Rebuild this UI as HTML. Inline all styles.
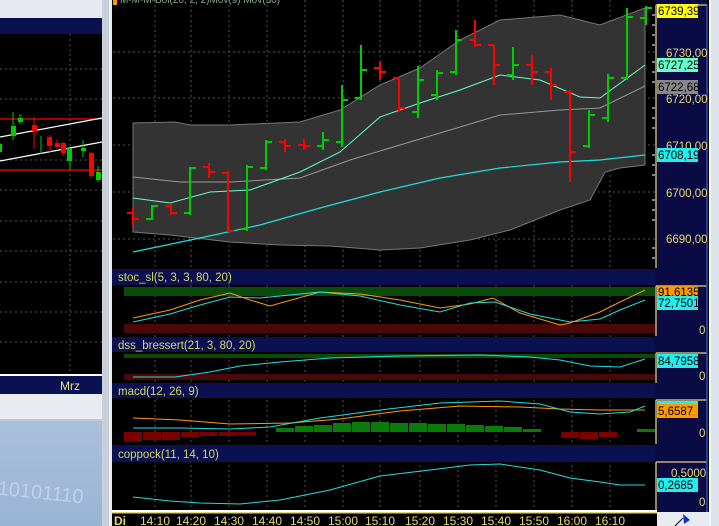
<!DOCTYPE html><html><head><style>body{margin:0;background:#000}svg{display:block}text{font-family:"Liberation Sans",sans-serif}</style></head><body>
<svg width="719" height="526" viewBox="0 0 719 526" xmlns="http://www.w3.org/2000/svg">
<defs><linearGradient id="bg" x1="0" y1="0" x2="0" y2="1"><stop offset="0" stop-color="#a8c0dc"/><stop offset="1" stop-color="#9ab4d4"/></linearGradient></defs>
<!-- left panel -->
<rect x="0" y="0" width="102" height="18" fill="#e6eaf0"/>
<rect x="0" y="18" width="102" height="16" fill="#0a1050"/>
<rect x="0" y="34" width="102" height="340" fill="#000"/>
<g stroke="#555" stroke-dasharray="2,3" stroke-width="1">
<line x1="70" y1="34" x2="70" y2="374"/>
<line x1="0" y1="69" x2="102" y2="69"/><line x1="0" y1="99" x2="102" y2="99"/><line x1="0" y1="160" x2="102" y2="160"/><line x1="0" y1="190" x2="102" y2="190"/><line x1="0" y1="221" x2="102" y2="221"/><line x1="0" y1="251" x2="102" y2="251"/><line x1="0" y1="282" x2="102" y2="282"/><line x1="0" y1="312" x2="102" y2="312"/><line x1="0" y1="342" x2="102" y2="342"/>
</g>
<line x1="0" y1="119" x2="102" y2="119" stroke="#f00" stroke-width="1.2"/>
<line x1="0" y1="170" x2="102" y2="170" stroke="#f00" stroke-width="1.2"/>
<line x1="0" y1="137" x2="102" y2="118" stroke="#fff" stroke-width="1.2"/>
<line x1="0" y1="161" x2="102" y2="142" stroke="#fff" stroke-width="1.2"/>
<g stroke-width="1">
<line x1="13" y1="112" x2="13" y2="140" stroke="#0c0"/><rect x="11" y="126" width="5" height="10" fill="#0c0"/>
<line x1="20" y1="114" x2="20" y2="124" stroke="#0c0"/><rect x="18" y="118" width="5" height="4" fill="#0c0"/>
<line x1="0" y1="143" x2="0" y2="152" stroke="#0c0"/><rect x="0" y="144" width="2" height="8" fill="#0c0"/>
<line x1="34" y1="117" x2="34" y2="149" stroke="#f00"/><rect x="32" y="125" width="5" height="6" fill="#f00"/>
<line x1="41" y1="136" x2="41" y2="154" stroke="#0c0"/>
<line x1="50" y1="135" x2="50" y2="152" stroke="#f00"/><rect x="47" y="137" width="5" height="9" fill="#f00"/>
<line x1="57" y1="140" x2="57" y2="148" stroke="#f00"/><rect x="55" y="143" width="5" height="4" fill="#f00"/>
<line x1="63" y1="142" x2="63" y2="156" stroke="#f00"/><rect x="61" y="143" width="5" height="10" fill="#f00"/>
<line x1="70" y1="148" x2="70" y2="170" stroke="#0c0"/><rect x="67" y="148" width="5" height="13" fill="#0c0"/>
<line x1="83" y1="140" x2="83" y2="157" stroke="#0c0"/><rect x="81" y="148" width="5" height="3" fill="#0c0"/>
<line x1="91" y1="152" x2="91" y2="178" stroke="#f00"/><rect x="89" y="153" width="5" height="23" fill="#f00"/>
<line x1="98" y1="166" x2="98" y2="182" stroke="#0c0"/><rect x="96" y="172" width="5" height="8" fill="#0c0"/>
</g>
<rect x="0" y="374" width="102" height="2" fill="#fff"/>
<rect x="0" y="376" width="102" height="18" fill="#0a1050"/>
<text x="60" y="390" font-size="12" fill="#e8e080">Mrz</text>
<rect x="0" y="394" width="102" height="25" fill="#e8ecf0"/>
<rect x="0" y="419" width="102" height="2" fill="#c0c8d0"/>
<rect x="0" y="421" width="102" height="105" fill="url(#bg)"/>
<text x="-2" y="500" font-size="20" fill="#c8d8ec" transform="rotate(6 50 490)" opacity="0.8">10101110</text>
<!-- divider -->
<rect x="102" y="0" width="10" height="526" fill="#c8d0da"/>
<rect x="109" y="0" width="3" height="526" fill="#e8ecf0"/>
<!-- right chart -->
<rect x="112" y="0" width="597" height="526" fill="#000"/>
<rect x="113" y="0" width="4" height="5" fill="#f90"/>
<text x="120" y="3" font-size="10" fill="#8a8">M-M-M-Bol(20, 2, 2)Mov(9) Mov(30)</text>
<g stroke="#555" stroke-dasharray="2,3">
<line x1="155" y1="0" x2="155" y2="510"/><line x1="191" y1="0" x2="191" y2="510"/><line x1="229" y1="0" x2="229" y2="510"/><line x1="267" y1="0" x2="267" y2="510"/><line x1="305" y1="0" x2="305" y2="510"/><line x1="343" y1="0" x2="343" y2="510"/><line x1="380" y1="0" x2="380" y2="510"/><line x1="420" y1="0" x2="420" y2="510"/><line x1="458" y1="0" x2="458" y2="510"/><line x1="496" y1="0" x2="496" y2="510"/><line x1="534" y1="0" x2="534" y2="510"/><line x1="572" y1="0" x2="572" y2="510"/><line x1="610" y1="0" x2="610" y2="510"/>
<line x1="113" y1="52" x2="655" y2="52"/><line x1="113" y1="98" x2="655" y2="98"/><line x1="113" y1="145" x2="655" y2="145"/><line x1="113" y1="192" x2="655" y2="192"/><line x1="113" y1="239" x2="655" y2="239"/>
</g>
<polygon fill="#333" stroke="#777" points="133,123 175,122 190,125 230,125 300,122 340,110 380,85 420,68 460,40 500,20 560,15 600,25 645,8 645,165 620,168 605,172 590,200 560,210 510,230 470,240 420,248 380,250 330,246 280,245 230,242 170,235 133,232"/>
<polyline fill="none" stroke="#999" points="133,177 180,182 230,182 300,178 350,160 400,145 450,130 500,115 560,110 600,108 645,86"/>
<polyline fill="none" stroke="#6fc" points="133,198 170,203 210,192 250,190 300,172 340,152 380,117 420,103 460,90 500,75 540,80 580,97 600,98 645,65"/>
<polyline fill="none" stroke="#2dd" stroke-width="1.2" points="133,252 200,238 260,225 320,208 380,192 440,178 500,168 560,162 600,160 645,155"/>
<g stroke-width="2" fill="none">
<path stroke="#f00" d="M133 207V226M127 213H133M133 219H139"/>
<path stroke="#0c0" d="M152 205V220M146 219H152M152 206H158"/>
<path stroke="#f00" d="M171 204V215M165 206H171M171 213H177"/>
<path stroke="#0c0" d="M190 167V215M184 213H190M190 168H196"/>
<path stroke="#f00" d="M209 163V178M203 167H209M209 172H215"/>
<path stroke="#f00" d="M228 171V232M222 173H228M228 231H234"/>
<path stroke="#0c0" d="M247 165V231M241 229H247M247 167H253"/>
<path stroke="#0c0" d="M266 140V170M260 168H266M266 142H272"/>
<path stroke="#f00" d="M285 139V152M279 142H285M285 146H291"/>
<path stroke="#f00" d="M304 139V150M298 145H304M304 146H310"/>
<path stroke="#0c0" d="M323 132V150M317 146H323M323 140H329"/>
<path stroke="#0c0" d="M342 85V147M336 142H342M342 100H348"/>
<path stroke="#0c0" d="M361 45V100M355 98H361M361 70H367"/>
<path stroke="#f00" d="M380 62V80M374 68H380M380 72H386"/>
<path stroke="#f00" d="M399 78V112M393 78H399M399 108H405"/>
<path stroke="#0c0" d="M418 66V118M412 112H418M418 80H424"/>
<path stroke="#0c0" d="M437 70V100M431 95H437M437 73H443"/>
<path stroke="#0c0" d="M456 30V75M450 72H456M456 40H462"/>
<path stroke="#f00" d="M475 20V47M469 40H475M475 45H481"/>
<path stroke="#f00" d="M494 45V85M488 45H494M494 65H500"/>
<path stroke="#0c0" d="M513 47V80M507 75H513M513 65H519"/>
<path stroke="#f00" d="M532 55V85M526 65H532M532 72H538"/>
<path stroke="#f00" d="M551 68V100M545 72H551M551 85H557"/>
<path stroke="#f00" d="M570 90V182M564 92H570M570 152H576"/>
<path stroke="#0c0" d="M589 110V148M583 146H589M589 115H595"/>
<path stroke="#0c0" d="M608 74V122M602 118H608M608 78H614"/>
<path stroke="#0c0" d="M627 8V80M621 78H627M627 17H633"/>
<path stroke="#0c0" d="M646 6V25M640 18H646M646 8H652"/>
</g>
<!-- sub panel headers -->
<rect x="112" y="269" width="545" height="16" fill="#0a1050"/>
<rect x="112" y="337" width="545" height="15" fill="#0a1050"/>
<rect x="112" y="383" width="545" height="15" fill="#0a1050"/>
<rect x="112" y="445" width="545" height="17" fill="#0a1050"/>
<g font-size="11.5" fill="#d8d860">
<text x="118" y="281">stoc_sl(5, 3, 3, 80, 20)</text>
<text x="118" y="349">dss_bressert(21, 3, 80, 20)</text>
<text x="118" y="395">macd(12, 26, 9)</text>
<text x="118" y="458">coppock(11, 14, 10)</text>
</g>
<!-- stoc -->
<rect x="124" y="287" width="531" height="9" fill="#0a4a0a"/>
<rect x="124" y="324" width="531" height="9" fill="#4a0808"/>
<polyline fill="none" stroke="#f90" points="133,318 170,310 200,300 230,293 250,300 270,306 320,292 360,294 400,300 440,308 470,304 493,298 520,313 560,325 570,323 600,312 620,302 645,290"/>
<polyline fill="none" stroke="#2dd" points="133,322 170,314 200,305 230,297 260,298 320,292 360,296 400,305 440,312 470,303 495,302 530,314 570,322 600,319 620,310 645,300"/>
<!-- dss -->
<rect x="124" y="354" width="531" height="4" fill="#0a4a0a"/>
<rect x="124" y="374" width="531" height="6" fill="#4a0808"/>
<polyline fill="none" stroke="#2dd" points="133,377 175,377 210,372 240,366 280,362 330,358 400,356 480,355 530,357 560,360 590,366 620,367 645,359"/>
<!-- macd -->
<g fill="#7a0000"><rect x="124" y="432" width="18" height="10"/><rect x="143" y="432" width="18" height="8"/><rect x="162" y="432" width="18" height="8"/><rect x="181" y="432" width="18" height="5"/><rect x="200" y="432" width="18" height="4"/><rect x="219" y="432" width="18" height="4"/><rect x="238" y="432" width="18" height="3"/><rect x="561" y="432" width="18" height="6"/><rect x="580" y="432" width="18" height="7"/><rect x="599" y="432" width="18" height="5"/></g>
<g fill="#0a7a0a"><rect x="276" y="428" width="18" height="4"/><rect x="295" y="426" width="18" height="6"/><rect x="314" y="425" width="18" height="7"/><rect x="333" y="423" width="18" height="9"/><rect x="352" y="422" width="18" height="10"/><rect x="371" y="422" width="18" height="10"/><rect x="390" y="423" width="18" height="9"/><rect x="409" y="423" width="18" height="9"/><rect x="428" y="424" width="18" height="8"/><rect x="447" y="424" width="18" height="8"/><rect x="466" y="425" width="18" height="7"/><rect x="485" y="426" width="18" height="6"/><rect x="504" y="427" width="18" height="5"/><rect x="523" y="429" width="18" height="3"/><rect x="637" y="429" width="18" height="3"/></g>
<polyline fill="none" stroke="#f90" points="133,418 180,420 230,424 290,423 340,419 400,411 460,406 520,407 560,409 600,410 645,410"/>
<polyline fill="none" stroke="#2dd" points="133,428 180,428 230,429 270,427 320,418 380,410 440,403 500,401 540,404 570,412 600,414 630,412 645,406"/>
<!-- coppock -->
<polyline fill="none" stroke="#2dd" points="133,497 170,501 200,503 240,504 280,500 330,490 380,476 430,470 470,465 500,464 540,470 570,478 600,482 620,485 645,485"/>
<!-- right axis -->
<rect x="655" y="0" width="52" height="512" fill="#0a0a44"/>
<g stroke="#e8d870" stroke-width="1.2" fill="none">
<path d="M656 5H707M656 5V268"/><path d="M656 286H707M656 286V336"/><path d="M656 353H707M656 353V383"/><path d="M656 400H707M656 400V444"/><path d="M656 462H707M656 462V510"/>
</g>
<g stroke="#3050c0" stroke-width="1.5"><line x1="707" y1="5" x2="707" y2="512"/></g>
<g stroke="#fff" stroke-width="1"><path d="M652 15h3M652 25h3M652 35h3M652 45h3M652 62h3M652 72h3M652 82h3M652 108h3M652 118h3M652 128h3M652 155h3M652 165h3M652 175h3M652 200h3M652 210h3M652 220h3M652 248h3M652 258h3"/></g>
<g font-size="11.5" fill="#e8d870">
<text x="666" y="57">6730,00</text><text x="666" y="103">6720,00</text><text x="666" y="150">6710,00</text><text x="666" y="197">6700,00</text><text x="666" y="243">6690,00</text>
<text x="699" y="334">0</text><text x="699" y="380">0</text><text x="699" y="437">0</text><text x="699" y="506">0</text><text x="671" y="477">0,5000</text>
</g>
<rect x="657" y="4" width="41" height="14" fill="#ff0"/><text x="658" y="15" font-size="11.5" fill="#000">6739,39</text>
<rect x="657" y="58" width="41" height="14" fill="#6fc"/><text x="658" y="69" font-size="11.5" fill="#000">6727,25</text>
<rect x="657" y="80" width="41" height="14" fill="#888"/><text x="658" y="91" font-size="11.5" fill="#000">6722,68</text>
<rect x="657" y="148" width="41" height="14" fill="#2ee"/><text x="658" y="159" font-size="11.5" fill="#000">6708,19</text>
<rect x="657" y="286" width="41" height="11" fill="#f90"/><text x="658" y="296" font-size="11.5" fill="#000">91,6135</text>
<rect x="657" y="296" width="41" height="14" fill="#2ee"/><text x="658" y="307" font-size="11.5" fill="#000">72,7501</text>
<rect x="657" y="354" width="41" height="14" fill="#2ee"/><text x="658" y="365" font-size="11.5" fill="#000">84,7958</text>
<rect x="657" y="401" width="41" height="5" fill="#2ee"/>
<rect x="657" y="404" width="41" height="14" fill="#f90"/><text x="658" y="415" font-size="11.5" fill="#000">5,6587</text>
<rect x="657" y="478" width="41" height="14" fill="#2ee"/><text x="658" y="489" font-size="11.5" fill="#000">0,2685</text>
<!-- time axis -->
<rect x="112" y="510" width="545" height="2" fill="#fff"/>
<rect x="112" y="512" width="545" height="14" fill="#000"/>
<rect x="112" y="512" width="545" height="1.5" fill="#e8d870"/>
<g font-size="12" fill="#e8d870"><text x="114" y="525" font-weight="bold">Di</text>
<text x="140" y="525">14:10</text><text x="176" y="525">14:20</text><text x="214" y="525">14:30</text><text x="252" y="525">14:40</text><text x="290" y="525">14:50</text><text x="328" y="525">15:00</text><text x="365" y="525">15:10</text><text x="405" y="525">15:20</text><text x="443" y="525">15:30</text><text x="481" y="525">15:40</text><text x="519" y="525">15:50</text><text x="557" y="525">16:00</text><text x="595" y="525">16:10</text></g>
<rect x="657" y="512" width="52" height="14" fill="#e8ecf0"/>
<path d="M675 526L683 518" stroke="#000"/><path d="M683 514L690 520L684 524Z" fill="#1030d0"/>
<rect x="709" y="0" width="10" height="526" fill="#dde3ea"/>
<rect x="709" y="0" width="2" height="526" fill="#f4f6f8"/>
</svg>
</body></html>
